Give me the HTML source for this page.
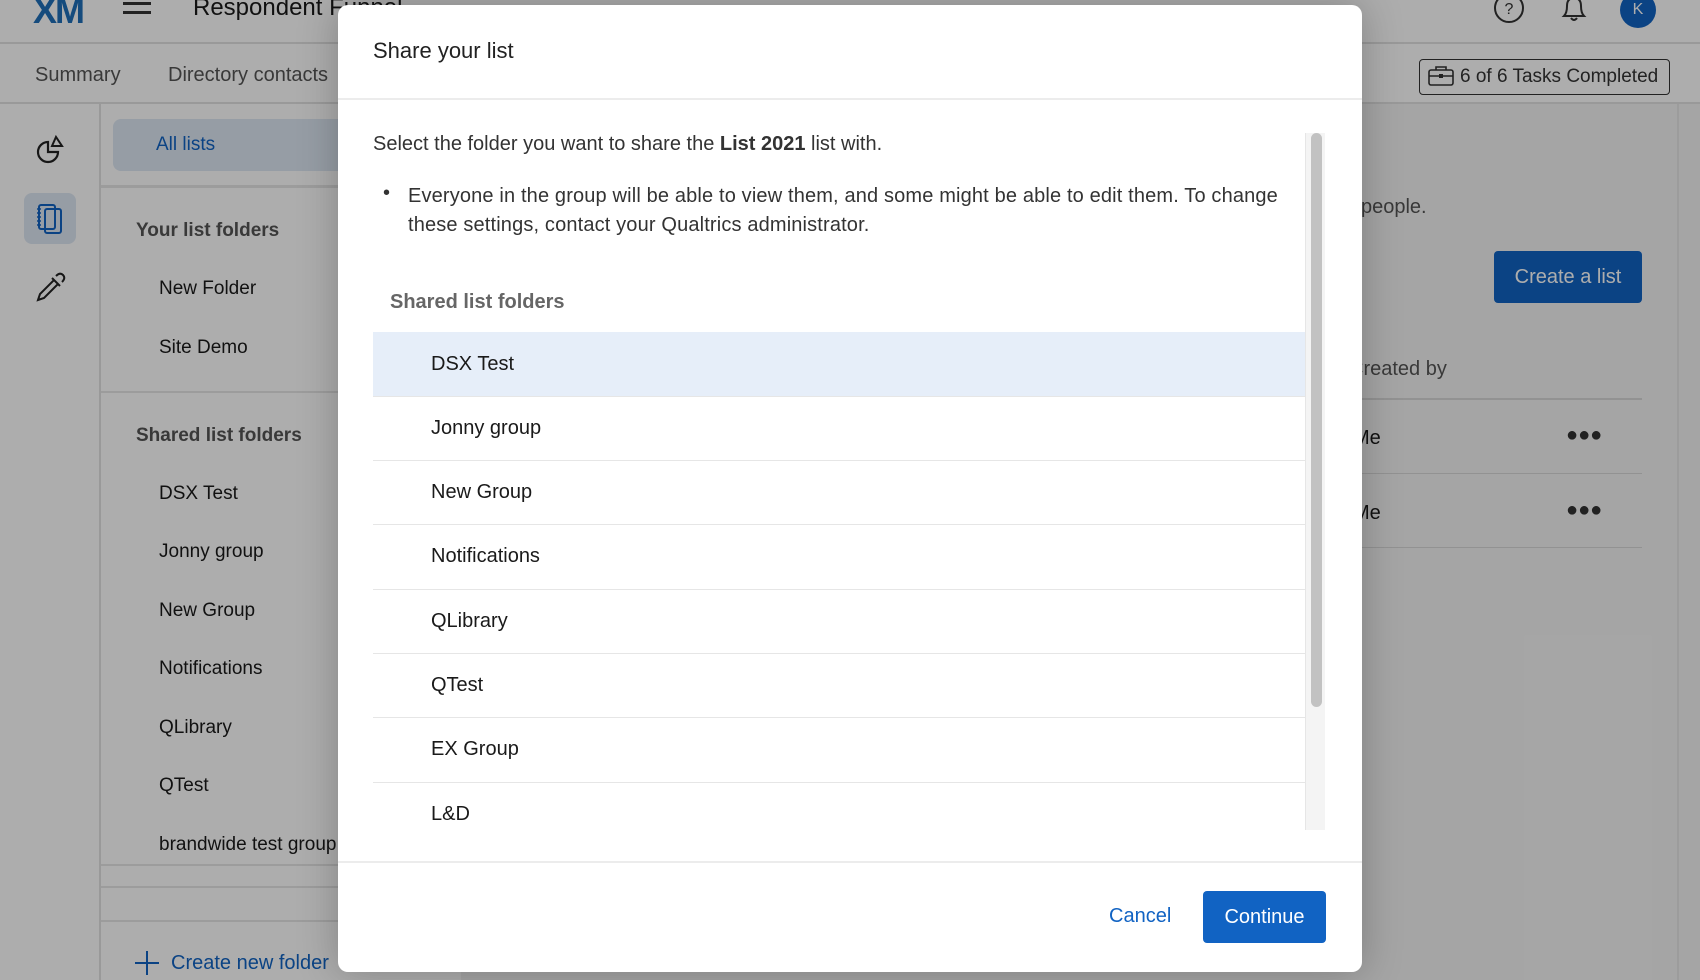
<!DOCTYPE html>
<html><head><meta charset="utf-8"><style>
*{box-sizing:border-box;margin:0;padding:0}
body{width:1700px;height:980px;overflow:hidden;position:relative;background:#f4f4f4;font-family:"Liberation Sans",sans-serif;color:#1a1a1a}
.a{position:absolute;white-space:nowrap}
.ov{position:absolute;left:0;top:0;width:1700px;height:980px;background:rgba(0,0,0,0.32)}
</style></head><body>
<div class="a" style="left:0;top:0;width:1700px;height:44px;background:#fff;border-bottom:2px solid #e2e2e2"></div>
<div class="a" style="left:33px;top:-10px;font-size:36px;font-weight:bold;color:#1f6fb8;letter-spacing:-2px">XM</div>
<div class="a" style="left:123px;top:2px;width:28px;height:3px;background:#333;box-shadow:0 9px 0 #333,0 -8px 0 #333"></div>
<div class="a" style="left:193px;top:-6px;font-size:24px">Respondent Funnel</div>
<svg class="a" style="left:1493px;top:-6px" width="32" height="32"><circle cx="16" cy="14" r="14" fill="none" stroke="#333" stroke-width="2"/><text x="16" y="20" font-size="16" text-anchor="middle" fill="#333" font-family="Liberation Sans">?</text></svg>
<svg class="a" style="left:1560px;top:-4px" width="28" height="28"><path d="M4 20 Q7 17 7 10 Q7 2 14 2 Q21 2 21 10 Q21 17 24 20 Z M11 22 Q14 26 17 22" fill="none" stroke="#333" stroke-width="2"/></svg>
<div class="a" style="left:1620px;top:-8px;width:36px;height:36px;border-radius:50%;background:#1163c3;color:#fff;font-size:16px;text-align:center;line-height:36px">K</div>
<div class="a" style="left:0;top:44px;width:1700px;height:60px;background:#fff;border-bottom:2px solid #e2e2e2"></div>
<div class="a" style="left:35px;top:64px;font-size:20px;color:#555">Summary</div>
<div class="a" style="left:168px;top:64px;font-size:20px;color:#555">Directory contacts</div>
<div class="a" style="left:1419px;top:59px;width:251px;height:36px;border:1.5px solid #333;border-radius:4px;background:#fff"></div>
<svg class="a" style="left:1428px;top:65px" width="26" height="22"><rect x="1" y="5" width="24" height="15" rx="2" fill="none" stroke="#333" stroke-width="1.6"/><path d="M8 5V2h10v3M1 11h24" fill="none" stroke="#333" stroke-width="1.6"/><rect x="11" y="9" width="4" height="4" fill="#333"/></svg>
<div class="a" style="left:1460px;top:66px;font-size:19px;color:#333">6 of 6 Tasks Completed</div>
<div class="a" style="left:0;top:104px;width:101px;height:876px;background:#fff;border-right:2px solid #e2e2e2"></div>
<svg class="a" style="left:34px;top:134px" width="32" height="30"><path d="M14 8 A10 10 0 1 0 24 18 H14 Z" fill="none" stroke="#222" stroke-width="2.2"/><path d="M18 12 L22 3 L28 12 Z" fill="none" stroke="#222" stroke-width="2"/></svg>
<div class="a" style="left:24px;top:193px;width:52px;height:51px;border-radius:8px;background:#dde7f4"></div>
<svg class="a" style="left:34px;top:203px" width="32" height="32"><rect x="5" y="2" width="16" height="24" rx="2" fill="none" stroke="#1163c3" stroke-width="2"/><rect x="11" y="6" width="16" height="24" rx="2" fill="none" stroke="#1163c3" stroke-width="2"/><path d="M3 6h4M3 10h4M3 14h4M3 18h4M3 22h4" stroke="#1163c3" stroke-width="1.5"/></svg>
<svg class="a" style="left:34px;top:272px" width="32" height="32"><path d="M4 28 L6 22 L20 8 L24 12 L10 26 Z M18 6 L26 14 M22 4 Q26 0 29 3 Q32 6 28 10" fill="none" stroke="#222" stroke-width="2"/></svg>
<div class="a" style="left:101px;top:104px;width:360px;height:876px;background:#fff"></div>
<div class="a" style="left:113px;top:119px;width:260px;height:52px;border-radius:8px;background:#dde7f4"></div>
<div class="a" style="left:156px;top:134px;font-size:19px;color:#1163c3">All lists</div>
<div class="a" style="left:101px;top:185px;width:300px;height:3px;background:#e6e6e6"></div>
<div class="a" style="left:136px;top:220px;font-size:19px;font-weight:bold;color:#555">Your list folders</div>
<div class="a" style="left:159px;top:278px;font-size:19px">New Folder</div>
<div class="a" style="left:159px;top:337px;font-size:19px">Site Demo</div>
<div class="a" style="left:101px;top:391px;width:300px;height:2px;background:#e6e6e6"></div>
<div class="a" style="left:136px;top:425px;font-size:19px;font-weight:bold;color:#555">Shared list folders</div>
<div class="a" style="left:159px;top:483px;font-size:19px">DSX Test</div>
<div class="a" style="left:159px;top:541px;font-size:19px">Jonny group</div>
<div class="a" style="left:159px;top:600px;font-size:19px">New Group</div>
<div class="a" style="left:159px;top:658px;font-size:19px">Notifications</div>
<div class="a" style="left:159px;top:717px;font-size:19px">QLibrary</div>
<div class="a" style="left:159px;top:775px;font-size:19px">QTest</div>
<div class="a" style="left:159px;top:834px;font-size:19px">brandwide test group</div>
<div class="a" style="left:101px;top:864px;width:300px;height:2px;background:#e6e6e6"></div>
<div class="a" style="left:101px;top:886px;width:300px;height:2px;background:#e6e6e6"></div>
<div class="a" style="left:101px;top:920px;width:300px;height:2px;background:#e6e6e6"></div>
<svg class="a" style="left:134px;top:950px" width="26" height="26"><path d="M13 1V25M1 13H25" stroke="#1163c3" stroke-width="2"/></svg>
<div class="a" style="left:171px;top:952px;font-size:20px;color:#1163c3">Create new folder</div>
<div class="a" style="left:1361px;top:196px;font-size:20px;color:#555">people.</div>
<div class="a" style="left:1494px;top:251px;width:148px;height:52px;border-radius:4px;background:#1163c3;color:#fff;font-size:20px;text-align:center;line-height:52px">Create a list</div>
<div class="a" style="left:1349px;top:358px;font-size:20px;color:#555">Created by</div>
<div class="a" style="left:1300px;top:398px;width:342px;height:2px;background:#d8d8d8"></div>
<div class="a" style="left:1353px;top:427px;font-size:20px">Me</div>
<div class="a" style="left:1566px;top:424px;font-size:20px;letter-spacing:0px;color:#333">●●●</div>
<div class="a" style="left:1300px;top:473px;width:342px;height:1px;background:#d8d8d8"></div>
<div class="a" style="left:1353px;top:502px;font-size:20px">Me</div>
<div class="a" style="left:1566px;top:499px;font-size:20px;letter-spacing:0px;color:#333">●●●</div>
<div class="a" style="left:1300px;top:547px;width:342px;height:1px;background:#d8d8d8"></div>
<div class="a" style="left:1677px;top:104px;width:2px;height:876px;background:#e6e6e6"></div>
<div class="ov"></div>
<div class="a" style="left:338px;top:5px;width:1024px;height:967px;background:#fff;border-radius:10px;box-shadow:0 0 40px rgba(0,0,0,0.25)">
  <div class="a" style="left:35px;top:33px;font-size:22px;color:#222">Share your list</div>
  <div class="a" style="left:0;top:93px;width:1024px;height:2px;background:#ececec"></div>
  <div class="a" style="left:35px;top:128px;font-size:20px;color:#333">Select the folder you want to share the <b>List 2021</b> list with.</div>
  <div class="a" style="left:45px;top:177px;font-size:20px;color:#333">•</div>
  <div class="a" style="left:70px;top:177px;font-size:20px;color:#333;line-height:29px;letter-spacing:0.15px">Everyone in the group will be able to view them, and some might be able to edit them. To change<br>these settings, contact your Qualtrics administrator.</div>
  <div class="a" style="left:52px;top:286px;font-size:20px;font-weight:bold;color:#666">Shared list folders</div>
  <div class="a" style="left:35px;top:327px;width:932px;height:64px;background:#e6eef9"></div>
  <div class="a" style="left:93px;top:348px;font-size:20px">DSX Test</div>
  <div class="a" style="left:35px;top:391px;width:932px;height:1px;background:#e6e6e6"></div>
  <div class="a" style="left:93px;top:412px;font-size:20px">Jonny group</div>
  <div class="a" style="left:35px;top:455px;width:932px;height:1px;background:#e6e6e6"></div>
  <div class="a" style="left:93px;top:476px;font-size:20px">New Group</div>
  <div class="a" style="left:35px;top:519px;width:932px;height:1px;background:#e6e6e6"></div>
  <div class="a" style="left:93px;top:540px;font-size:20px">Notifications</div>
  <div class="a" style="left:35px;top:584px;width:932px;height:1px;background:#e6e6e6"></div>
  <div class="a" style="left:93px;top:605px;font-size:20px">QLibrary</div>
  <div class="a" style="left:35px;top:648px;width:932px;height:1px;background:#e6e6e6"></div>
  <div class="a" style="left:93px;top:669px;font-size:20px">QTest</div>
  <div class="a" style="left:35px;top:712px;width:932px;height:1px;background:#e6e6e6"></div>
  <div class="a" style="left:93px;top:733px;font-size:20px">EX Group</div>
  <div class="a" style="left:35px;top:777px;width:932px;height:1px;background:#e6e6e6"></div>
  <div class="a" style="left:93px;top:798px;font-size:20px">L&amp;D</div>
  <div class="a" style="left:967px;top:128px;width:20px;height:697px;background:#f4f4f4;border-left:1px solid #e6e6e6"></div>
  <div class="a" style="left:973px;top:128px;width:11px;height:574px;border-radius:6px;background:#c2c2c2"></div>
  <div class="a" style="left:0;top:856px;width:1024px;height:2px;background:#ececec"></div>
  <div class="a" style="left:771px;top:900px;font-size:20px;color:#1163c3">Cancel</div>
  <div class="a" style="left:865px;top:886px;width:123px;height:52px;border-radius:4px;background:#1163c3;color:#fff;font-size:20px;text-align:center;line-height:52px">Continue</div>
</div>
</body></html>
